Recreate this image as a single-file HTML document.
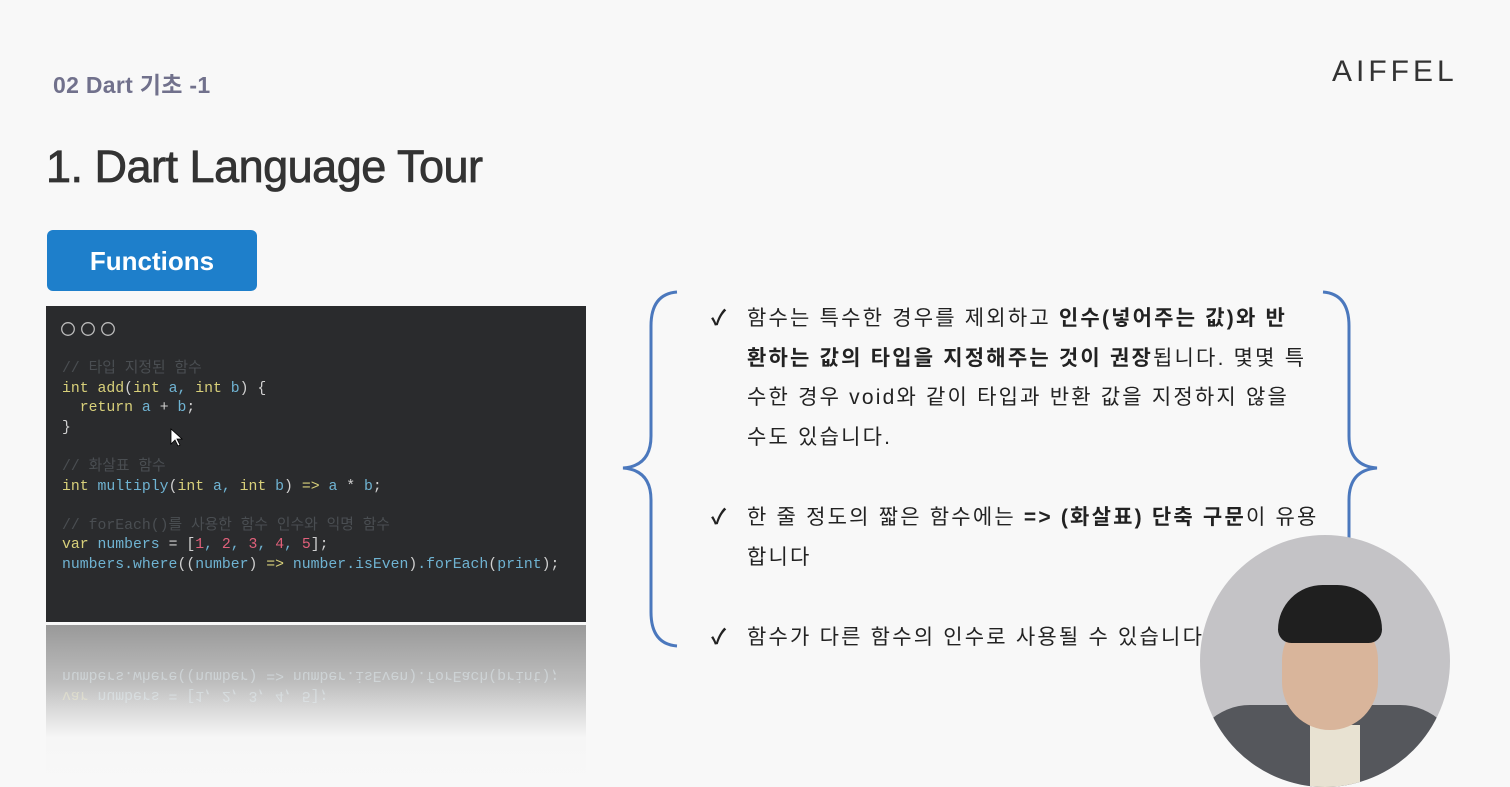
<!DOCTYPE html>
<html><head><meta charset="utf-8"><style>
body{margin:0;width:1510px;height:786px;background:#f8f8f8;position:relative;overflow:hidden;font-family:"Liberation Sans","Noto Sans CJK KR",sans-serif}
.a{position:absolute}
.code{font-family:"Liberation Mono","Noto Sans CJK KR",monospace;font-size:14.8px;line-height:19.6px;white-space:pre;color:#6fb3d2}
.y{color:#d8d07a}.b{color:#6fb3d2}.c{color:#4a4e52}.r{color:#e0607a}.w{color:#d0d0d0}.g{color:#b6d77a}
.t{font-size:21px;color:#222;line-height:39.5px;letter-spacing:2.2px;white-space:nowrap}
.t b{font-weight:bold}
.ck{position:absolute;left:-36px;font-size:21px;font-weight:bold;letter-spacing:0}
</style></head><body>
<div class="a" style="left:53px;top:66px;font-size:23px;color:#5a5a7a;letter-spacing:0.3px;font-weight:bold;opacity:0.85">02 Dart 기초 -1</div>
<div class="a" style="left:1332px;top:55px;font-size:30px;letter-spacing:4px;color:#333;font-weight:300">AIFFEL</div>
<div class="a" style="left:46px;top:141px;font-size:45px;color:#333;letter-spacing:-0.5px;-webkit-text-stroke:0.8px #333">1. Dart Language Tour</div>
<div class="a" style="left:47px;top:230px;width:210px;height:61px;background:#1e7fcb;border-radius:6px;color:#fff;font-weight:bold;font-size:26px;text-align:center;line-height:62px">Functions</div>
<div class="a" style="left:46px;top:306px;width:540px;height:316px;background:#2a2b2d"></div>
<div class="a" style="left:60px;top:321px">
<svg width="60" height="16"><circle cx="8" cy="8" r="6.3" fill="none" stroke="#bbb" stroke-width="1.3"/><circle cx="28" cy="8" r="6.3" fill="none" stroke="#bbb" stroke-width="1.3"/><circle cx="48" cy="8" r="6.3" fill="none" stroke="#bbb" stroke-width="1.3"/></svg></div>
<div class="a code" style="left:62px;top:360px"><span class="c">// 타입 지정된 함수</span>
<span class="y">int add</span><span class="w">(</span><span class="y">int</span> a, <span class="y">int</span> b<span class="w">) {</span>
  <span class="y">return</span> a <span class="w">+</span> b<span class="w">;</span>
<span class="w">}</span>

<span class="c">// 화살표 함수</span>
<span class="y">int</span> multiply<span class="w">(</span><span class="y">int</span> a, <span class="y">int</span> b<span class="w">)</span> <span class="y">=></span> a <span class="w">*</span> b<span class="w">;</span>

<span class="c">// forEach()를 사용한 함수 인수와 익명 함수</span>
<span class="y">var</span> numbers <span class="w">=</span> <span class="w">[</span><span class="r">1</span>, <span class="r">2</span>, <span class="r">3</span>, <span class="r">4</span>, <span class="r">5</span><span class="w">];</span>
numbers.where<span class="w">((</span>number<span class="w">)</span> <span class="y">=></span> number.isEven<span class="w">)</span>.forEach<span class="w">(</span>print<span class="w">);</span></div>
<svg class="a" style="left:170px;top:428px" width="14" height="20"><path d="M1 1 L1 16 L5 12 L8 18 L10 17 L7 11 L12 11 Z" fill="#fff" stroke="#000" stroke-width="0.8"/></svg>
<div class="a" style="left:46px;top:625px;width:540px;height:161px;background:linear-gradient(#999 0%,#bdbdbd 35%,#f6f6f6 70%,#f8f8f8 100%);overflow:hidden">
<div class="code" style="position:absolute;left:16px;top:40px;transform:scaleY(-1);opacity:0.45;color:#e6f2f7"><span style="color:#f3f0d0">var</span> numbers = [1, 2, 3, 4, 5];
numbers.where((number) => number.isEven).forEach(print);</div></div>
<svg class="a" style="left:615px;top:286px" width="780" height="370" fill="none" stroke="#4b78bd" stroke-width="3">
<path d="M62 6 Q36 8 36 40 L36 150 Q36 180 8 182 Q36 184 36 214 L36 326 Q36 358 62 360"/>
<path d="M708 6 Q734 8 734 40 L734 150 Q734 180 762 182 Q734 184 734 214 L734 326 Q734 358 708 360"/>
</svg>
<div class="a t" style="left:747px;top:299px"><span class="ck">✓</span>함수는 특수한 경우를 제외하고 <b>인수(넣어주는 값)와 반<br>환하는 값의 타입을 지정해주는 것이 권장</b>됩니다. 몇몇 특<br>수한 경우 void와 같이 타입과 반환 값을 지정하지 않을<br>수도 있습니다.</div>
<div class="a t" style="left:747px;top:498px"><span class="ck">✓</span>한 줄 정도의 짧은 함수에는 <b>=&gt; (화살표) 단축 구문</b>이 유용<br>합니다</div>
<div class="a t" style="left:747px;top:618px"><span class="ck">✓</span>함수가 다른 함수의 인수로 사용될 수 있습니다.</div>
<div class="a" style="left:1200px;top:535px;width:250px;height:252px;border-radius:50%;background:#c4c3c6;overflow:hidden">
<div class="a" style="left:-10px;top:170px;width:270px;height:120px;background:#55575c;border-radius:60px 60px 0 0"></div>
<div class="a" style="left:110px;top:190px;width:50px;height:70px;background:#e8e2d2"></div>
<div class="a" style="left:82px;top:80px;width:96px;height:115px;background:#d9b59b;border-radius:45px 45px 48px 48px"></div>
<div class="a" style="left:78px;top:50px;width:104px;height:58px;background:#1f1f1f;border-radius:50px 50px 15px 15px"></div>
</div>
</body></html>
